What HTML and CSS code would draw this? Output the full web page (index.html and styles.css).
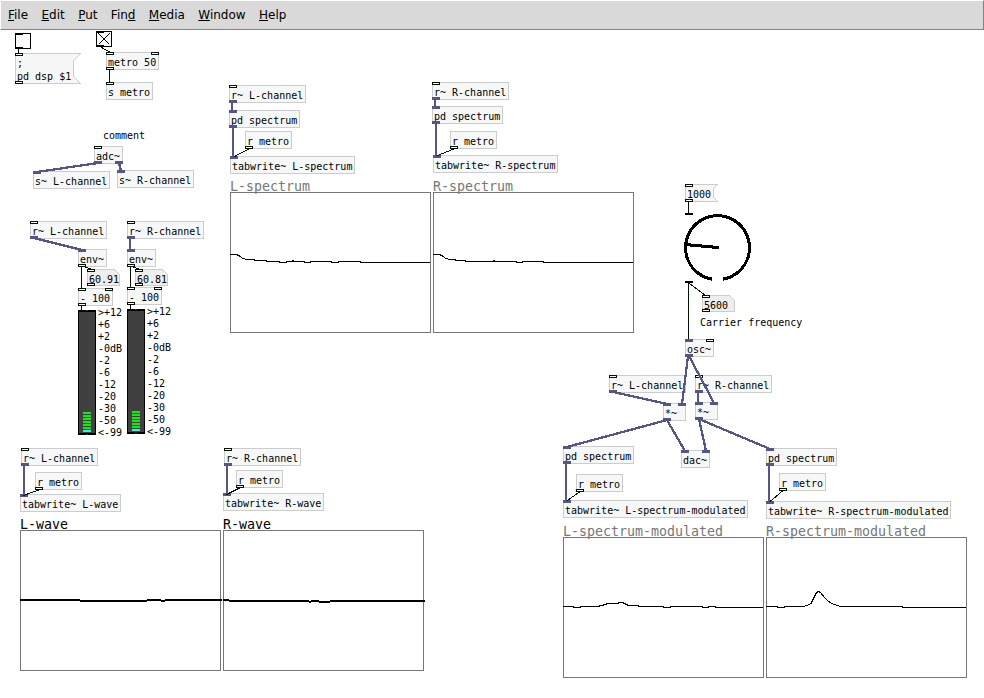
FILE: index.html
```html
<!DOCTYPE html>
<html lang="en">
<head>
<meta charset="utf-8">
<title>Pure Data patch</title>
<link rel="stylesheet" href="styles.css">
</head>
<body>
<nav class="menubar">
  <span><u>F</u>ile</span><span><u>E</u>dit</span><span><u>P</u>ut</span><span>Fin<u>d</u></span><span><u>M</u>edia</span><span><u>W</u>indow</span><span><u>H</u>elp</span>
</nav>
<main class="patch">
<svg class="canvas" viewBox="0 30 984 668" width="984" height="668">
  <defs>
    <rect id="c" class="ctl" x=".5" y=".5" width="7" height="2"/>
    <rect id="s" class="sig" width="8" height="3"/>
    <g id="w28"><rect class="box" x=".5" y=".5" width="28" height="17"/></g>
    <g id="w34"><rect class="box" x=".5" y=".5" width="34" height="17"/></g>
    <g id="w46"><rect class="box" x=".5" y=".5" width="46" height="17"/></g>
    <g id="w70"><rect class="box" x=".5" y=".5" width="70" height="17"/></g>
    <g id="w76"><rect class="box" x=".5" y=".5" width="76" height="17"/></g>
    <path id="num" class="numbox" d="M.5 .5H27.5L32.5 5.5V16.5H.5Z"/>
    <g id="vu">
      <rect class="ink" width="18" height="125"/>
      <rect class="meter" x="1" y="2" width="16" height="121"/>
      <path class="tick" d="M8 .5h2M8 124.5h2"/>
      <path class="green" d="M5 103h8M5 106h8M5 109h8M5 112h8M5 115h8M5 118h8"/>
      <path class="cyan" d="M5 121h8"/>
    </g>
  </defs>

  <!-- dsp switch and metro -->
  <g transform="translate(15 33)"><rect class="toggle" x=".5" y=".5" width="15" height="15"/><path class="ink" d="M0 0h8v2H0zM0 14h8v2H0z"/></g>
  <g transform="translate(15 53)"><path class="box" d="M.5 .5H65.5L58.5 7.5V23.5L65.5 30.5H.5Z"/><text x="2" y="14">;</text><text x="2" y="27">pd dsp $1</text><use href="#c"/><use href="#c" y="28"/></g>
  <g transform="translate(96 31)"><rect class="toggle" x=".5" y=".5" width="15" height="15"/><path class="ink" d="M0 0h8v2H0zM0 14h8v2H0z"/><path class="cross" d="M2.5 2.5l11 11M13.5 2.5l-11 11"/></g>
  <g transform="translate(106 52)"><rect class="box" x=".5" y=".5" width="52" height="17"/><text x="2" y="14">metro 50</text><use href="#c"/><use href="#c" x="45"/><use href="#c" y="15"/></g>
  <g transform="translate(106 82)"><use href="#w46"/><text x="2" y="14">s metro</text><use href="#c"/></g>

  <!-- audio input -->
  <text x="103" y="139">comment</text>
  <g transform="translate(94 146)"><use href="#w28"/><text x="2" y="14">adc~</text><use href="#c"/><use href="#s" y="15"/><use href="#s" x="21" y="15"/></g>
  <g transform="translate(33 171)"><use href="#w76"/><text x="2" y="14">s~ L-channel</text><use href="#s"/></g>
  <g transform="translate(117 170)"><use href="#w76"/><text x="2" y="14">s~ R-channel</text><use href="#s"/></g>

  <!-- level meters -->
  <g transform="translate(30 221)"><use href="#w76"/><text x="2" y="14">r~ L-channel</text><use href="#c"/><use href="#s" y="15"/></g>
  <g transform="translate(127 221)"><use href="#w76"/><text x="2" y="14">r~ R-channel</text><use href="#c"/><use href="#s" y="15"/></g>
  <g transform="translate(78 249)"><use href="#w28"/><text x="2" y="14">env~</text><use href="#s"/><use href="#c" y="15"/></g>
  <g transform="translate(127 249)"><use href="#w28"/><text x="2" y="14">env~</text><use href="#s"/><use href="#c" y="15"/></g>
  <g transform="translate(87 269)"><use href="#num"/><text x="2" y="14">60.91</text><use href="#c"/><use href="#c" y="14"/></g>
  <g transform="translate(135 269)"><use href="#num"/><text x="2" y="14">60.81</text><use href="#c"/><use href="#c" y="14"/></g>
  <g transform="translate(78 288)"><use href="#w34"/><text x="2" y="14">- 100</text><use href="#c"/><use href="#c" x="27"/><use href="#c" y="15"/></g>
  <g transform="translate(127 287)"><use href="#w34"/><text x="2" y="14">- 100</text><use href="#c"/><use href="#c" x="27"/><use href="#c" y="15"/></g>
  <use href="#vu" x="78" y="310"/>
  <use href="#vu" x="127" y="309"/>
  <g transform="translate(98 316)"><text>&gt;+12</text><text y="12">+6</text><text y="24">+2</text><text y="36">-0dB</text><text y="48">-2</text><text y="60">-6</text><text y="72">-12</text><text y="84">-20</text><text y="96">-30</text><text y="108">-50</text><text y="120">&lt;-99</text></g>
  <g transform="translate(147 315)"><text>&gt;+12</text><text y="12">+6</text><text y="24">+2</text><text y="36">-0dB</text><text y="48">-2</text><text y="60">-6</text><text y="72">-12</text><text y="84">-20</text><text y="96">-30</text><text y="108">-50</text><text y="120">&lt;-99</text></g>

  <!-- input spectra -->
  <g transform="translate(229 85)"><use href="#w76"/><text x="2" y="14">r~ L-channel</text><use href="#c"/><use href="#s" y="15"/></g>
  <g transform="translate(229 110)"><use href="#w70"/><text x="2" y="14">pd spectrum</text><use href="#s"/><use href="#s" y="15"/></g>
  <g transform="translate(245 131)"><use href="#w46"/><text x="2" y="14">r metro</text><use href="#c" y="15"/></g>
  <g transform="translate(230 156)"><rect class="box" x=".5" y=".5" width="124" height="17"/><text x="2" y="14">tabwrite~ L-spectrum</text><use href="#s"/></g>
  <g transform="translate(432 82)"><use href="#w76"/><text x="2" y="14">r~ R-channel</text><use href="#c"/><use href="#s" y="15"/></g>
  <g transform="translate(432 106)"><use href="#w70"/><text x="2" y="14">pd spectrum</text><use href="#s"/><use href="#s" y="15"/></g>
  <g transform="translate(450 131)"><use href="#w46"/><text x="2" y="14">r metro</text><use href="#c" y="15"/></g>
  <g transform="translate(433 155)"><rect class="box" x=".5" y=".5" width="124" height="17"/><text x="2" y="14">tabwrite~ R-spectrum</text><use href="#s"/></g>
  <text class="title dim" x="230" y="191">L-spectrum</text>
  <text class="title dim" x="433" y="191">R-spectrum</text>
  <rect class="graph" x="230.5" y="192.5" width="200" height="140"/>
  <rect class="graph" x="433.5" y="192.5" width="200" height="140"/>
  <path class="trace" d="M230 254.5H236L239 255.5L243 258.5L247 259.5H252L257 260.5H265L268 261.5H279V262.5H286V261.5H292V260.5H293V261.5H304V262.5H310V261.5H331V262.5H338V261.5H360V262.5H430"/>
  <path class="trace" d="M433 254.5H439L442 255.5L446 258.5L450 259.5H454L457 260.5H464L467 261.5H493V260.5H494V261.5H516V262.5H522V261.5H543V262.5H633"/>

  <!-- carrier -->
  <g transform="translate(685 184)"><path class="box" d="M.5 .5H32.5L28.5 4.5V13.5L32.5 17.5H.5Z"/><text x="2" y="14">1000</text><use href="#c"/><use href="#c" y="15"/></g>
  <path class="ink" d="M685 213h8v2h-8zM685 281h8v2h-8z"/>
  <path class="dial" d="M712 279.2A32 32 0 1 1 723 279.2M719 247.6L685 244.5"/>
  <g transform="translate(702 295)"><use href="#num"/><text x="2" y="14">5600</text><use href="#c"/><use href="#c" y="14"/></g>
  <text x="700" y="326">Carrier frequency</text>
  <g transform="translate(685 339)"><use href="#w28"/><text x="2" y="14">osc~</text><use href="#s"/><use href="#c" x="21"/><use href="#s" y="15"/></g>

  <!-- ring modulation -->
  <g transform="translate(609 375)"><use href="#w76"/><text x="2" y="14">r~ L-channel</text><use href="#c"/><use href="#s" y="15"/></g>
  <g transform="translate(695 375)"><use href="#w76"/><text x="2" y="14">r~ R-channel</text><use href="#c"/><use href="#s" y="15"/></g>
  <g transform="translate(663 403)"><rect class="box" x=".5" y=".5" width="22" height="17"/><text x="2" y="14">*~</text><use href="#s"/><use href="#s" x="15"/><use href="#s" y="15"/></g>
  <g transform="translate(695 402)"><rect class="box" x=".5" y=".5" width="22" height="17"/><text x="2" y="14">*~</text><use href="#s"/><use href="#s" x="15"/><use href="#s" y="15"/></g>
  <g transform="translate(681 450)"><use href="#w28"/><text x="2" y="14">dac~</text><use href="#s"/><use href="#s" x="21"/></g>

  <!-- modulated spectra -->
  <g transform="translate(563 446)"><use href="#w70"/><text x="2" y="14">pd spectrum</text><use href="#s"/><use href="#s" y="15"/></g>
  <g transform="translate(576 474)"><use href="#w46"/><text x="2" y="14">r metro</text><use href="#c" y="15"/></g>
  <g transform="translate(563 500)"><rect class="box" x=".5" y=".5" width="184" height="17"/><text x="2" y="14">tabwrite~ L-spectrum-modulated</text><use href="#s"/></g>
  <g transform="translate(766 448)"><use href="#w70"/><text x="2" y="14">pd spectrum</text><use href="#s"/><use href="#s" y="15"/></g>
  <g transform="translate(779 473)"><use href="#w46"/><text x="2" y="14">r metro</text><use href="#c" y="15"/></g>
  <g transform="translate(766 501)"><rect class="box" x=".5" y=".5" width="184" height="17"/><text x="2" y="14">tabwrite~ R-spectrum-modulated</text><use href="#s"/></g>
  <text class="title dim" x="563" y="536">L-spectrum-modulated</text>
  <text class="title dim" x="766" y="536">R-spectrum-modulated</text>
  <rect class="graph" x="563.5" y="537.5" width="200" height="140"/>
  <rect class="graph" x="766.5" y="537.5" width="200" height="140"/>
  <path class="trace" d="M563 606.5H573V607.5H580V606.5H599V605.5H603V604.5H606V603.5H618V602.5H623V603.5H625V604.5H627V605.5H638V606.5H663V607.5H670V606.5H702V607.5H708V606.5H715V607.5H763"/>
  <path class="trace" d="M766 606.5H777V607.5H784V606.5H803L807 605.5L811 603.5L813.5 598.5L816.5 592.5L818.5 591.5L820.5 592.5L824.5 597.5L828.5 601.5L834 604.5L841 606.5H902V607.5H966"/>

  <!-- waveforms -->
  <g transform="translate(21 448)"><use href="#w76"/><text x="2" y="14">r~ L-channel</text><use href="#c"/><use href="#s" y="15"/></g>
  <g transform="translate(35 472)"><use href="#w46"/><text x="2" y="14">r metro</text><use href="#c" y="15"/></g>
  <g transform="translate(20 494)"><rect class="box" x=".5" y=".5" width="100" height="17"/><text x="2" y="14">tabwrite~ L-wave</text><use href="#s"/></g>
  <g transform="translate(224 448)"><use href="#w76"/><text x="2" y="14">r~ R-channel</text><use href="#c"/><use href="#s" y="15"/></g>
  <g transform="translate(236 470)"><use href="#w46"/><text x="2" y="14">r metro</text><use href="#c" y="15"/></g>
  <g transform="translate(223 493)"><rect class="box" x=".5" y=".5" width="100" height="17"/><text x="2" y="14">tabwrite~ R-wave</text><use href="#s"/></g>
  <text class="title" x="20" y="529">L-wave</text>
  <text class="title" x="223" y="529">R-wave</text>
  <rect class="graph" x="20.5" y="530.5" width="200" height="140"/>
  <rect class="graph" x="223.5" y="530.5" width="200" height="140"/>
  <path class="trace bold" d="M20 600H80M80 601H147M147 600H161M161 601H165M165 600H222"/>
  <path class="trace bold" d="M223 600H229M229 601H309M309 602H311M311 601H319M319 602H330M330 601H425"/>

  <!-- control cords -->
  <path class="cord" d="M18.5 49V53M100 46.5L109.5 52M109.5 70V82M81.5 267V288M84 266.5L90.5 269M130.5 267V287M132 266.5L138.5 269M81.5 306V310M130.5 305V309M249 149L233.5 157M453.5 149L436.5 156M688.5 202V213M688.5 283V339M689 283L705.5 295.5M579.5 492L566.5 501M782.5 491L769.5 502M38.5 490L23.5 495.5M239.5 488L226.5 494.5"/>
  <!-- signal cords -->
  <path class="wire" d="M130 238V250M232 102V111M233 127V157M435 99V107M436 123V156M24 465V495M227 465V494M698 392V403M566 463V501M769 465V502"/>
  <path class="wire slanted" d="M98 163L37 172M119 163L121 171M34 238L82 250M613 392L667 404M688 356L682 404M689 356L714 403M667 420L567 447M667 420L685 451M699 419L706 451M699 419L770 449"/>
</svg>
</main>
</body>
</html>
```

FILE: styles.css
```css
* {
  box-sizing: border-box;
}

body {
  margin: 0;
  background: #fff;
  overflow: hidden;
}

.menubar {
  display: flex;
  align-items: center;
  gap: 13.4px;
  height: 30px;
  padding: 0 7px;
  background: #d9d9d9;
  border: 1px solid #fff;
  border-right-color: #828282;
  border-bottom-color: #828282;
  color: #000;
  font: 12px/28px "DejaVu Sans", sans-serif;
}

.menubar u {
  text-decoration-thickness: 1px;
  text-underline-offset: 1px;
  text-decoration-skip-ink: none;
}

.canvas {
  display: block;
  shape-rendering: crispEdges;
}

.canvas text {
  font: 10px "DejaVu Sans Mono", monospace;
  fill: #000;
  white-space: pre;
}

.canvas .title {
  font-size: 13.3px;
}

.canvas .dim {
  fill: #777;
}

.box {
  fill: #f6f8f8;
  stroke: #ccc;
}

.numbox {
  fill: #eee;
  stroke: #ccc;
}

.toggle {
  fill: #fcfcfc;
  stroke: #000;
}

.ctl {
  fill: #fff;
  stroke: #001400;
}

.sig {
  fill: #558;
}

.ink {
  fill: #000;
}

.cross,
.trace {
  fill: none;
  stroke: #000;
}

.bold {
  stroke-width: 2;
}

.meter {
  fill: #404040;
}

.tick {
  stroke: #404040;
}

.green {
  stroke: #14e814;
  stroke-width: 2;
}

.cyan {
  stroke: #28f4f4;
  stroke-width: 2;
}

.graph {
  fill: none;
  stroke: #777;
}

.dial {
  fill: none;
  stroke: #000;
  stroke-width: 3;
}

.cord {
  fill: none;
  stroke: #001400;
}

.wire {
  fill: none;
  stroke: #558;
  stroke-width: 2;
}

.slanted {
  stroke-width: 2.3;
}
```
